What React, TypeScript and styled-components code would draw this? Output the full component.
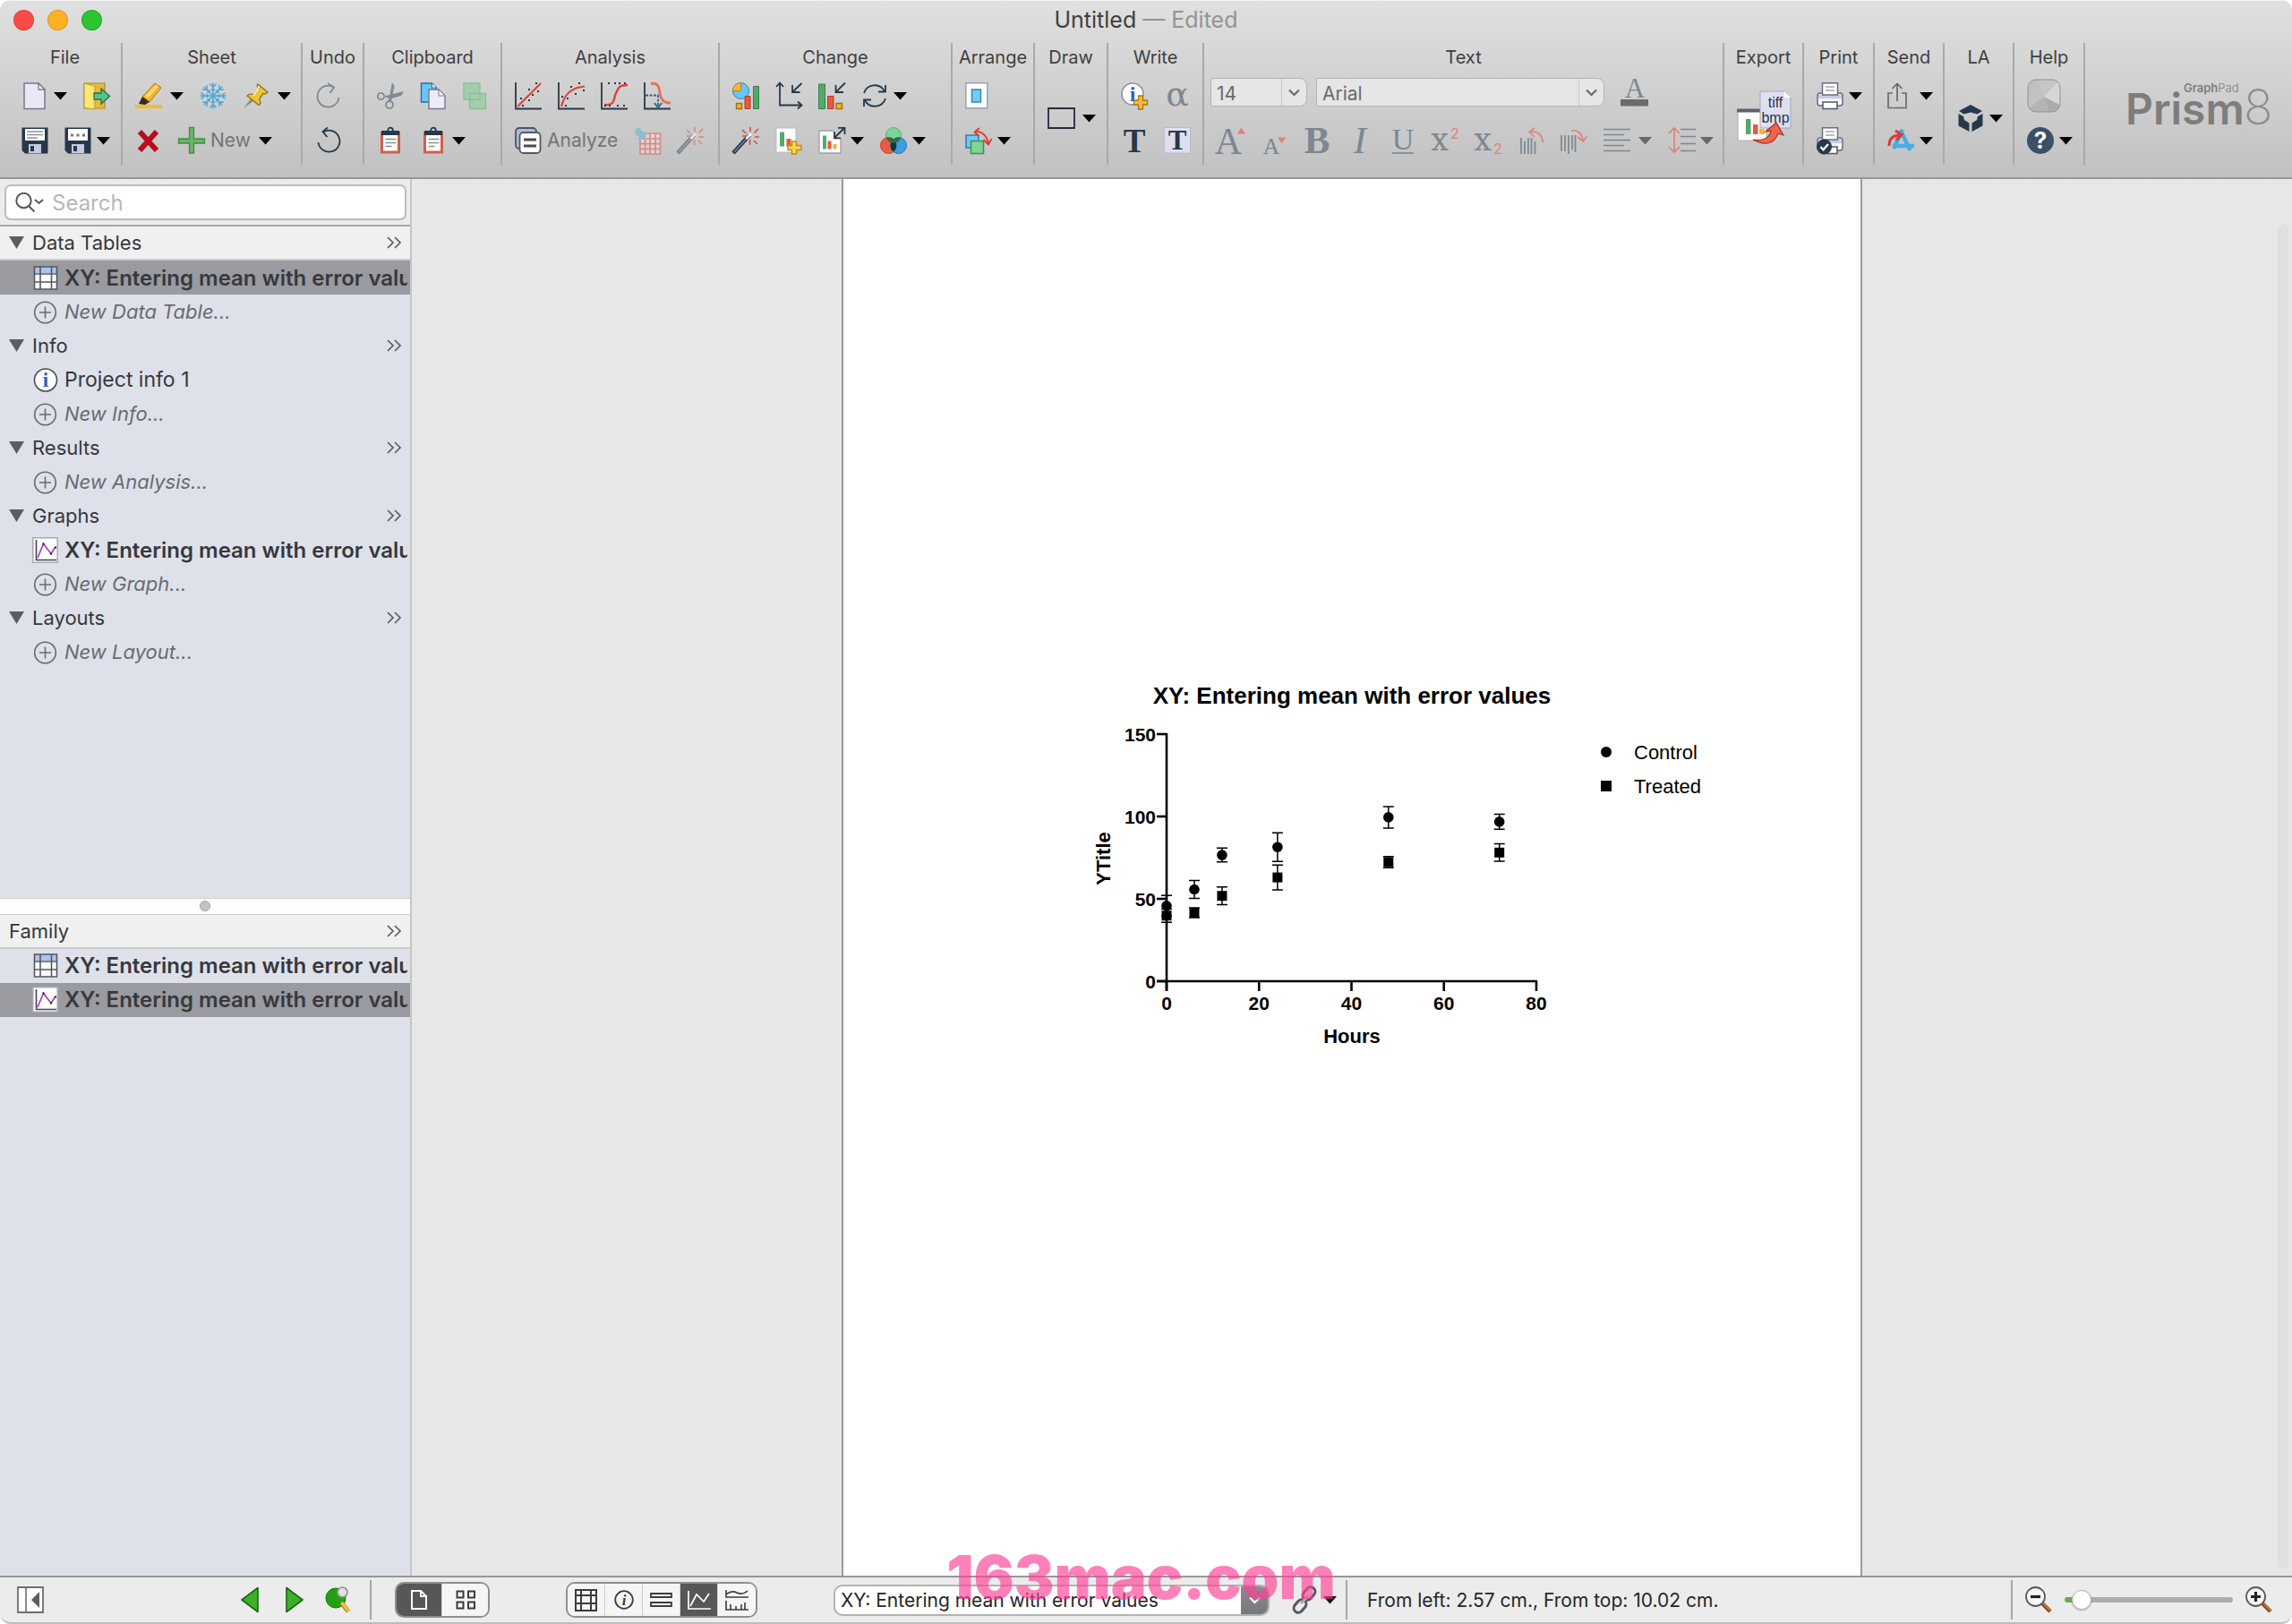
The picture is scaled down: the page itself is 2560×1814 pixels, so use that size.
import React from "react";
import styled, { createGlobalStyle, css } from "styled-components";

const UI = `Inter, "Liberation Sans", sans-serif`;
const SERIF = `"Liberation Serif", serif`;
const SLAB = `"DejaVu Serif", "Liberation Serif", serif`;
const NAVY = "#26384a";
const RED = "#e0443a";
const GREEN = "#55a868";
const STEEL = "#7c8791";

const GlobalStyle = createGlobalStyle`
  *, *::before, *::after { box-sizing: border-box; }
  body { margin: 0; background: #fff; font-family: ${UI}; }
  button, select, input { font: inherit; color: inherit; }
`;

/* ---------- window frame ---------- */

const Window = styled.div`
  position: relative;
  display: flex;
  flex-direction: column;
  height: 100vh;
  overflow: hidden;
  border-radius: 12px;
  border-bottom: 2px solid #bdbdbd;
  background: #e7e7e7;
  color: #37383b;
`;

const Header = styled.header`
  flex: none;
  border-top: 1px solid #f4f4f4;
  border-bottom: 2px solid #979797;
  background: linear-gradient(#e0e0e0, #d2d2d2 45%, #c1c1c1);
`;

const TitleBar = styled.div`
  display: grid;
  grid-template-columns: 1fr auto 1fr;
  align-items: center;
  height: 42px;
  padding: 0 15px;
`;

const Lights = styled.div`
  display: flex;
  gap: 15px;
`;

const Light = styled.button<{ $color: string }>`
  width: 23px;
  height: 23px;
  padding: 0;
  border: 1px solid rgba(0, 0, 0, 0.12);
  border-radius: 50%;
  background: ${(p) => p.$color};
`;

const Title = styled.h1`
  margin: 0;
  font-size: 25px;
  line-height: 28px;
  font-weight: 400;
  color: #404040;
  span { color: #949494; }
`;

/* ---------- ribbon ---------- */

const Ribbon = styled.div`
  display: flex;
  padding: 5px 24px 14px 10px;
`;

const Group = styled.section<{ $width: number }>`
  flex: none;
  width: ${(p) => p.$width}px;
  height: 136px;
  padding-top: 4px;
  border-right: 2px solid #a9a9a9;
`;

const GroupLabel = styled.h2`
  margin: 0 0 6px;
  font-size: 20px;
  line-height: 24px;
  font-weight: 400;
  text-align: center;
  white-space: nowrap;
  color: #404040;
`;

const Rows = styled.div<{ $pad?: number }>`
  display: grid;
  grid-auto-rows: 1fr;
  height: 100px;
  padding-left: ${(p) => p.$pad ?? 14}px;
`;

const Row = styled.div<{ $indent?: boolean; $gap?: number; $raised?: boolean }>`
  display: flex;
  align-items: center;
  gap: ${(p) => p.$gap ?? 18}px;
  padding-left: ${(p) => (p.$indent ? 7 : 0)}px;
  padding-bottom: ${(p) => (p.$raised ? 8 : 0)}px;
`;

const Split = styled.div<{ $wide?: boolean }>`
  display: flex;
  align-items: center;
  gap: ${(p) => (p.$wide ? 9 : 6)}px;
`;

const ToolButton = styled.button<{ $faded?: boolean }>`
  display: flex;
  align-items: center;
  gap: 6px;
  padding: 0;
  border: 0;
  background: none;
  font-size: 21px;
  line-height: 30px;
  color: #747474;
  opacity: ${(p) => (p.$faded ? 0.5 : 1)};
  svg { display: block; flex: none; overflow: visible; }
`;

const ComboFrame = styled.div<{ $width: number }>`
  display: flex;
  width: ${(p) => p.$width}px;
  height: 32px;
  border: 1px solid #b3b3b3;
  border-radius: 2px 8px 8px 2px;
  background: #e6e6e6;
  color: #6a6a6a;
`;

const ComboSelect = styled.select`
  flex: 1;
  min-width: 0;
  padding: 3px 0 0 6px;
  border: 0;
  background: none;
  appearance: none;
  font-size: 21px;
  line-height: 26px;
`;

const ComboArrow = styled.span`
  display: grid;
  place-items: center;
  width: 28px;
  border-left: 1px solid #c8c8c8;
`;

const Brand = styled.div`
  display: flex;
  align-items: center;
  margin-left: auto;
  svg { overflow: visible; }
`;

/* ---------- body ---------- */

const Body = styled.div`
  display: flex;
  flex: 1;
  min-height: 0;
`;

const Sidebar = styled.aside`
  display: flex;
  flex-direction: column;
  flex: none;
  width: 460px;
  border-right: 2px solid #c6c6ca;
  background: #dee1ea;
`;

const SearchPane = styled.div`
  padding: 6px 4px 5px 5px;
  border-bottom: 2px solid #a6a6a6;
  background: #ececec;
`;

const SearchBox = styled.label`
  display: flex;
  align-items: center;
  gap: 9px;
  height: 40px;
  padding: 0 10px;
  border: 2px solid #bcbcbc;
  border-radius: 7px;
  background: #fff;
`;

const SearchInput = styled.input`
  flex: 1;
  min-width: 0;
  padding: 0;
  border: 0;
  outline: 0;
  background: none;
  font-size: 24px;
  &::placeholder { color: #b7b7b7; opacity: 1; }
`;

const Tree = styled.nav`
  flex: 64 1 0;
  min-height: 0;
  overflow: hidden;
`;

const SectionHead = styled.h3<{ $plate?: boolean }>`
  display: flex;
  align-items: center;
  gap: 10px;
  height: 38px;
  margin: 0;
  padding: 0 9px 0 10px;
  font-size: 22px;
  font-weight: 400;
  ${(p) =>
    p.$plate &&
    css`
      border-bottom: 2px solid #c9cacd;
      background: #f0f0f0;
    `}
`;

const SectionToggle = styled.button`
  display: flex;
  align-items: center;
  flex: 1;
  gap: 9px;
  padding: 0;
  border: 0;
  background: none;
  text-align: left;
`;

const MoreButton = styled.button`
  padding: 0;
  border: 0;
  background: none;
  svg { display: block; }
`;

const ITEM_SIZE = { bold: 24, plain: 23, new: 22 };

const ItemRow = styled.button<{ $kind: "bold" | "plain" | "new"; $selected?: boolean }>`
  display: flex;
  align-items: center;
  gap: 7px;
  width: 100%;
  height: 38px;
  padding: 0 3px 0 36px;
  border: 0;
  background: ${(p) => (p.$selected ? "#999ba0" : "none")};
  font-size: ${(p) => ITEM_SIZE[p.$kind]}px;
  font-weight: ${(p) => (p.$kind === "bold" ? 600 : 400)};
  font-style: ${(p) => (p.$kind === "new" ? "italic" : "normal")};
  color: ${(p) => (p.$kind === "new" ? "#696b70" : "#37383b")};
  text-align: left;
  svg { flex: none; }
  span {
    flex: 1;
    overflow: hidden;
    white-space: nowrap;
  }
`;

const Splitter = styled.div`
  display: grid;
  place-items: center;
  flex: none;
  height: 19px;
  border: 1px solid #cfcfd2;
  border-width: 1px 0;
  background: #fdfdfd;
  &::after {
    content: "";
    width: 12px;
    height: 12px;
    border: 1px solid #a4a4a4;
    border-radius: 50%;
    background: #c4c4c4;
  }
`;

const FamilyPane = styled.section`
  flex: 63 1 0;
  min-height: 0;
`;

const Canvas = styled.main`
  position: relative;
  display: flex;
  justify-content: center;
  flex: 1;
  min-width: 0;
`;

const Page = styled.div`
  display: flex;
  align-items: center;
  justify-content: center;
  width: 1140px;
  border: 2px solid #9a9a9a;
  border-width: 0 2px;
  background: #fff;
`;

const ScrollThumb = styled.div`
  position: absolute;
  top: 50px;
  right: 4px;
  bottom: 8px;
  width: 12px;
  border-radius: 6px;
  background: #dfdfdf;
`;

/* ---------- status bar ---------- */

const StatusBar = styled.footer`
  display: flex;
  align-items: center;
  flex: none;
  height: 52px;
  border-top: 2px solid #979797;
  background: #ececec;
  color: #262626;
`;

const StatusLeft = styled.div`
  display: flex;
  align-items: center;
  justify-content: space-between;
  width: 415px;
  height: 44px;
  padding: 0 20px 0 19px;
  border-right: 2px solid #a6a6a6;
`;

const NavButtons = styled.div`
  display: flex;
  gap: 18px;
`;

const Segments = styled.div<{ $left: number }>`
  display: flex;
  height: 40px;
  margin-left: ${(p) => p.$left}px;
  border: 2px solid #8e8e8e;
  border-radius: 10px;
  overflow: hidden;
`;

const Segment = styled.button<{ $on?: boolean; $wide?: boolean }>`
  display: grid;
  place-items: center;
  width: ${(p) => (p.$wide ? 51 : 42)}px;
  padding: 0;
  border: 0;
  border-right: 1px solid #d0d0d0;
  background: ${(p) => (p.$on ? "#575757" : "#f5f5f5")};
  color: ${(p) => (p.$on ? "#fff" : "#3c3c3c")};
  &:last-child { border-right: 0; }
`;

const SheetPicker = styled.div`
  display: flex;
  width: 487px;
  height: 35px;
  margin-left: 85px;
  border: 2px solid #b2b2b2;
  border-radius: 10px;
  background: #fff;
  overflow: hidden;
`;

const SheetSelect = styled.select`
  flex: 1;
  min-width: 0;
  padding: 0 0 0 6px;
  border: 0;
  background: none;
  appearance: none;
  font-size: 21px;
`;

const SheetArrow = styled.span`
  display: grid;
  place-items: center;
  width: 30px;
  background: linear-gradient(#8b8b90, #77777c);
`;

const LinkTool = styled.div`
  display: flex;
  align-items: center;
  gap: 6px;
  height: 44px;
  padding: 0 10px 0 24px;
  border-right: 2px solid #a6a6a6;
`;

const Position = styled.p`
  margin: 0 0 0 22px;
  font-size: 21px;
  white-space: nowrap;
`;

const Zoom = styled.div`
  display: flex;
  align-items: center;
  gap: 14px;
  height: 44px;
  margin-left: auto;
  padding: 0 22px 0 14px;
  border-left: 2px solid #a6a6a6;
`;

const ZoomSlider = styled.input`
  width: 188px;
  height: 24px;
  margin: 0;
  appearance: none;
  background: none;
  &::-webkit-slider-runnable-track {
    height: 6px;
    border-radius: 3px;
    background: linear-gradient(90deg, #6fa84f 8%, #adadad 8%);
  }
  &::-webkit-slider-thumb {
    appearance: none;
    width: 22px;
    height: 22px;
    margin-top: -8px;
    border: 1px solid #b5b5b5;
    border-radius: 50%;
    background: #fff;
    box-shadow: 0 1px 2px rgba(0, 0, 0, 0.25);
  }
`;

const Watermark = styled.div`
  position: absolute;
  left: 41.3%;
  bottom: 10px;
  font-size: 67px;
  line-height: 80px;
  font-weight: 900;
  color: rgba(255, 64, 150, 0.66);
  pointer-events: none;
`;

/* ---------- drawings ---------- */

type Kids = { children: React.ReactNode };
const I = ({ children }: Kids) => (
  <svg width="30" height="30" viewBox="0 0 30 30" fill="none" aria-hidden="true">{children}</svg>
);

const CaretMark = ({ color = "#000" }: { color?: string }) => (
  <svg width="15" height="9" viewBox="0 0 15 9" aria-hidden="true"><path d="M0 0h15L7.500 8.500z" fill={color} /></svg>
);

const Chevron = ({ color = "#6a6a6a" }: { color?: string }) => (
  <svg width="13" height="9" viewBox="0 0 13 9" fill="none" aria-hidden="true">
    <path d="M1 1.500l5.500 5.500L12 1.500" stroke={color} strokeWidth="2.200" />
  </svg>
);

const Floppy = ({ dots }: { dots?: boolean }) => (
  <I>
    <path d="M.5.5h29v29H4l-3.500-3.500z" fill={NAVY} />
    <path d="M4 2h22v13H4z" fill="#fff" />
    {dots ? (
      <path d="M7 7.500h3v3H7zM13.500 7.500h3v3h-3zM20 7.500h3v3h-3z" fill="#777" />
    ) : (
      <path d="M6 5h18M6 8.500h18M6 12h12" stroke="#8e9296" strokeWidth="1.300" />
    )}
    <path d="M8 19h14v10H8z" fill="#c5c9e2" />
    <path d="M10 21h4v6h-4z" fill={NAVY} />
  </I>
);

const Clipboard = () => (
  <I>
    <path d="M4 5h22v24.500H4z" fill="#cf5f4b" />
    <path d="M7 9h16v17.500H7z" fill="#fff" />
    <path d="M5 4h20v5H5z" fill={NAVY} />
    <circle cx="15" cy="3.500" r="2.800" stroke={NAVY} strokeWidth="1.800" />
    <path d="M9.500 13.500h12M9.500 17.500h12M9.500 21.500h7" stroke="#8a8f98" strokeWidth="1.400" />
  </I>
);

const Plot = ({ children }: Kids) => (
  <I>
    <path d="M1 0v29.500H30" stroke={NAVY} strokeWidth="1.800" />
    {children}
  </I>
);

const Wand = () => (
  <I>
    <path d="M1 29l18-20" stroke={NAVY} strokeWidth="4.500" />
    <path d="M2 28L15.500 13" stroke="#6f7f90" strokeWidth="1.600" />
    <path d="M15.500 13l5-5.500" stroke="#fff" strokeWidth="3" />
    <path d="M20 0v5M11 3l4 4M29 2l-4.500 4.500M25 11h5M24 15l4 4M19.500 14v6M11 10h4" stroke={RED} strokeWidth="1.500" />
  </I>
);

const Printer = ({ done }: { done?: boolean }) => (
  <I>
    <rect x="1" y="12" width="28" height="14" rx="3" fill="#f4f4fb" stroke="#6b6c80" strokeWidth="1.500" />
    <path d="M2 16h26" stroke="#c9cae6" strokeWidth="4" />
    <path d="M6.500.8h17V14h-17z" fill="#fff" stroke="#6b6c80" strokeWidth="1.500" />
    <path d="M10 5h10M10 9h10" stroke="#a4a8ad" strokeWidth="1.300" />
    <path d="M7 22h16v7.500H7z" fill="#fff" stroke="#55566a" strokeWidth="1.500" />
    {done && (
      <>
        <circle cx="8.500" cy="22" r="8.500" fill={NAVY} />
        <path d="M4.500 22l3 3.300 5.500-6.300" stroke="#fff" strokeWidth="2.200" />
      </>
    )}
  </I>
);

const Glyph = ({ text, size, weight = 400, italic, family = SERIF, color = STEEL, x = 15, y = 29 }: {
  text: string; size: number; weight?: number; italic?: boolean; family?: string; color?: string; x?: number; y?: number;
}) => (
  <text x={x} y={y} fontSize={size} fontWeight={weight} fontStyle={italic ? "italic" : "normal"} textAnchor="middle" fill={color} style={{ fontFamily: family }}>
    {text}
  </text>
);

const Icons = {
  newDoc: <I><path d="M3 1h16l7 7v21.500H3z" fill="#e9e9f6" stroke="#77788f" strokeWidth="1.500" /><path d="M19 1l7 7h-7z" fill="#fff" stroke="#77788f" strokeWidth="1.300" /></I>,
  exit: <I><path d="M1 1h23v28H1z" fill="#e9b93c" stroke="#b08a1e" strokeWidth="1.200" /><path d="M1 1l12 3v26L1 28.500z" fill="#fbe774" stroke="#b9982f" /><path d="M12 12h8V7l9.500 8.500L20 24v-5h-8z" fill="#56c48a" stroke="#22734c" strokeWidth="1.300" /></I>,
  highlight: <I><path d="M0 25h30v4H0z" fill="#f3bd2a" /><path d="M8 16L22 1l7 5-13 16z" fill="#f4b42c" stroke="#a87716" /><path d="M11 15.500L23.500 2.500l2.500 2-12 13.500z" fill="#fbd870" /><path d="M8 16l8 6-5 3-7-1z" fill="#3a2a1a" /></I>,
  snow: <I><g stroke="#4ba7dc" strokeWidth="1.500">{[0, 45, 90, 135].map((a) => (
    <path key={a} transform={`rotate(${a} 15 15)`} d="M15 .5v29M11.500 1.500L15 5.500l3.500-4M11.500 28.500L15 24.500l3.500 4M13 7.500l2 2 2-2M13 22.500l2-2 2 2" />))}</g></I>,
  pin: <I><path d="M1 29l9-12 3 3z" fill="#8b8b8b" /><path d="M17 2l11 9-3 2-2-.500-4 6 1 5-2 2L5 15l3-2 5 .500 5-6L16 4z" fill="#e9c437" stroke="#8a6d12" strokeWidth="1.200" /><path d="M18 4l-1 4-5 7" stroke="#fbeaa0" strokeWidth="2" /></I>,
  redo: <I><path d="M21 5.500A12 12 0 1 0 26.500 17" stroke="#7f8a95" strokeWidth="1.800" /><path d="M14 1l7 4.500-4.500 6.500" stroke="#7f8a95" strokeWidth="1.800" /></I>,
  undo: <I><path d="M9 5.500A12 12 0 1 1 3.500 17" stroke={NAVY} strokeWidth="1.800" /><path d="M14 .5L8.500 5l5 6" stroke={NAVY} strokeWidth="1.800" /></I>,
  cut: <I><circle cx="4.500" cy="15.500" r="3.700" stroke="#7f8a95" strokeWidth="1.800" /><circle cx="14" cy="25" r="4" stroke="#7f8a95" strokeWidth="1.800" /><path d="M8 15.500l22-5.500-3 5-12.500 3.500zM13 21L17 0l2.500 4L16 21z" fill="#7f8a95" /></I>,
  copy: <I><path d="M1.500 1h12l5 5v16h-17z" fill="#67c6f7" stroke="#2c6d9c" strokeWidth="1.400" /><path d="M13.500 1v5h5" fill="#fff" stroke="#2c6d9c" /><path d="M10 8h11l7 7v14.500H10z" fill="#ececf9" stroke="#77788f" strokeWidth="1.400" /><path d="M21 8v7h7z" fill="#fff" stroke="#77788f" /></I>,
  dup: <I><path d="M1 1h18v18H1zM7.500 12.500h18v17h-18z" fill="#a2cdac" stroke="#8abf97" strokeWidth="1.300" /></I>,
  cross: <I><path d="M5 5l19 21M24 5L5 26" stroke="#b80f1f" strokeWidth="6" /></I>,
  plus: <I><path d="M12.500.5h5v12.500h12v5h-12v11h-5V18h-12v-5h12z" fill="#68b468" stroke="#3f8f45" strokeWidth="1.300" /></I>,
  linear: <Plot><path d="M3 27L29 1" stroke={RED} strokeWidth="2.200" /><path d="M8 25h2v2H8zM15 19h2v2h-2zM6 17h2v2H6zM19 13h2v2h-2zM25 9h2v2h-2zM23 0h2v2h-2zM15 7h2v2h-2z" fill={NAVY} /></Plot>,
  curve: <Plot><path d="M4 27Q9 6 30 4.500" stroke={RED} strokeWidth="2.200" /><path d="M8 25h2v2H8zM10 17h2v2h-2zM4 15h2v2H4zM19 12h2v2h-2zM28 8h2v2h-2zM23 0h2v2h-2zM14 4h2v2h-2z" fill={NAVY} /></Plot>,
  sigmoid: <Plot><path d="M4 25C17 26 14 18 17 12S20 3 30 3" stroke={RED} strokeWidth="2.400" /><path d="M8 0h2v2H8zM15 0h2v2h-2zM20 0h2v2h-2zM26 0h2v2h-2zM4 25h2v2H4zM9 25h2v2H9zM18 25h2v2h-2zM25 25h2v2h-2z" fill={NAVY} /></Plot>,
  interp: <Plot><path d="M8 1.500C17 0 17 6 18 12s3 11 12 11" stroke="#f06f55" strokeWidth="2.800" /><path d="M2 14.500h14V27" stroke="#2e5f92" strokeWidth="1.800" strokeDasharray="3 1.500" /><path d="M12 23l4 5.500 4-5.500" stroke="#2e5f92" strokeWidth="1.800" /></Plot>,
  analyze: <I><rect x="1" y="1" width="23" height="23" rx="4" fill="#a9bde0" stroke="#4f535b" strokeWidth="1.800" /><rect x="5.500" y="6" width="23" height="23" rx="4" fill="#fff" stroke="#55585e" strokeWidth="1.800" /><path d="M10 14h14M10 21h14" stroke="#4c4c4c" strokeWidth="3" /></I>,
  grid: <I><path d="M7 7h22.500v23H7z" fill="#f7e2df" /><path d="M7 7h22.500v23H7zM7 13h22.500M7 18.700h22.500M7 24.300h22.500M12.500 7v23M18 7v23M24 7v23" stroke="#e2544a" strokeWidth="1.700" /><path d="M2 2l5-1 1 3 5 2v8H4l2-3-5-4z" fill="#4fb3e4" /></I>,
  wand: <Wand />,
  chartType: <I><circle cx="9.500" cy="9.500" r="9" fill="#67c6f7" stroke="#3b84b5" /><path d="M9.500.5v9h-9a9 9 0 0 1 9-9z" fill="#f5b93f" stroke="#b78420" /><path d="M23.500 4.500h6v25h-6z" fill={GREEN} stroke="#37814a" /><path d="M14 15.500h6v14h-6z" fill="#e9593f" stroke="#b03b26" /><path d="M4.500 23.500h6v6h-6z" fill="#f3b23a" stroke="#9c7011" strokeWidth="1.400" /></I>,
  axes: <I><path d="M5 1v24.500h24M1 5l4-4.500L9 5M25 21.500l4.500 4-4.500 4M29.500 1L19.500 10.500M19 3v8h8.500" stroke={NAVY} strokeWidth="1.800" /></I>,
  reorder: <I><path d="M.5 2h7v27.500h-7z" fill={GREEN} stroke="#37814a" /><path d="M10.500 15.500h6.500v14h-6.500z" fill="#e9593f" stroke="#b03b26" /><path d="M20 23.500h6.500v6H20z" fill="#f3b23a" stroke="#9c7011" strokeWidth="1.400" /><path d="M30 .5L20 10.500M19.500 3v8H28" stroke={NAVY} strokeWidth="1.800" /></I>,
  refresh: <I><path d="M3 12A12.500 12.500 0 0 1 26 10M27 18A12.500 12.500 0 0 1 4 20" stroke={NAVY} strokeWidth="1.800" /><path d="M19 10.500h8V3M11 19.500H3V27" stroke={NAVY} strokeWidth="1.800" /></I>,
  addChart: <I><path d="M1 1h22v27H1z" fill="#fff" stroke="#b9bac8" /><path d="M5 5.500h5v16H5z" fill={GREEN} /><path d="M12.500 13h5v9h-5z" fill="#e9593f" /><path d="M18.500 16h5v4.500h5.500v5h-5.500v4.500h-5v-4.500h-4.500v-5h4.500z" fill="#fbd74b" stroke="#b98d16" strokeWidth="1.300" /></I>,
  scaleChart: <I><path d="M1 4h24v25H1z" fill="#fff" stroke="#9c9eb0" strokeWidth="1.300" /><path d="M5 9.500h4v15H5z" fill={GREEN} /><path d="M10.500 15.500h4v9h-4z" fill="#e9593f" /><path d="M16.500 19h4v5.500h-4z" fill="#f3b23a" /><path d="M17 0h13v13H17z" fill="#cbcbcb" /><path d="M18 12L29.500.5M22 .8h7.500V8M25 12.300h-7V5" stroke={NAVY} strokeWidth="1.800" /></I>,
  venn: <I><circle cx="15" cy="9" r="8.500" fill="#7ed39a" stroke="#5bb279" /><circle cx="9.500" cy="20.500" r="9" fill="#f0593c" stroke="#b9432c" /><circle cx="20.500" cy="20.500" r="9" fill="#3d9de0" stroke="#2c77b0" /><path d="M15 13.500a9 9 0 0 1 0 14 9 9 0 0 1 0-14z" fill="#123a33" /><path d="M7 12a9 9 0 0 1 8 1.500 9 9 0 0 1 8-1.500 8.500 8.500 0 0 1-16 0z" fill="#2d6b46" /></I>,
  page: <I><path d="M.8.8h24v28H.8z" fill="#fff" stroke="#9c9eb8" strokeWidth="1.500" /><path d="M7.500 8h10v14h-10z" fill="#6fcbf9" stroke="#3c86b3" strokeWidth="1.500" /></I>,
  arrange: <I><path d="M1 9h14v14H1z" fill="#6fc8f5" stroke="#2f7fae" strokeWidth="1.500" /><path d="M6.500 15.500h14v14h-14z" fill="#82d495" stroke="#3e9150" strokeWidth="1.500" /><path d="M11 5c7-1 13 4 15 13M16 1l-5.500 4.500 5 4.500M20.500 14l5.500 5.500 3.500-6.500" stroke="#dc3a33" strokeWidth="1.800" /></I>,
  rect: <I><path d="M1 4h29v22H1z" stroke="#2d2740" strokeWidth="1.800" /></I>,
  info: <I><circle cx="13" cy="13" r="12" fill="#fff" stroke="#8b8e9c" strokeWidth="1.600" /><Glyph text="i" size={24} weight={700} color="#2d63b4" x={13} y={21} /><path d="M19.500 15h5v5h5v5h-5v5h-5v-5h-5v-5h5z" fill="#f7b93c" stroke="#a9780f" strokeWidth="1.300" /></I>,
  alpha: <I><Glyph text="α" size={38} family={SLAB} y={26} x={15} /></I>,
  tPlain: <I><Glyph text="T" size={37} weight={700} color={NAVY} y={28} x={15} /></I>,
  tBox: <I><path d="M.5.5h29v28.500H.5z" fill="#dfe0ef" stroke="#b9bace" /><Glyph text="T" size={31} weight={700} color={NAVY} y={25} /></I>,
  grow: <I><Glyph text="A" size={42} x={13} y={30} /><path d="M23 7.500L27.500.5 32 7.500z" fill="#d9847c" /></I>,
  shrink: <I><Glyph text="A" size={26} x={13} y={30} /><path d="M20 11.500h9.500L24.700 18z" fill="#d9847c" /></I>,
  bold: <I><Glyph text="B" size={43} weight={700} x={16} /></I>,
  italic: <I><Glyph text="I" size={43} italic x={16} /></I>,
  under: <I><Glyph text="U" size={34} x={16} y={25} /><path d="M4 29h24" stroke={STEEL} strokeWidth="1.600" /></I>,
  sup: <I><Glyph text="x" size={35} x={9} y={26} family={SLAB} /><Glyph text="2" size={16} x={26} y={13} family={UI} color="#dd8279" /></I>,
  sub: <I><Glyph text="x" size={35} x={9} y={26} family={SLAB} /><Glyph text="2" size={16} x={26} y={30} family={UI} color="#dd8279" /></I>,
  rotL: <I><path d="M4 12v18M8 16v14M12 12v18M15.500 12v18M19.500 16v14" stroke={STEEL} strokeWidth="1.700" /><path d="M14 5c7-1 14 3 14 12M19 1l-6 4 6 6" stroke="#e08078" strokeWidth="1.600" /></I>,
  rotR: <I><path d="M1 9v18M5 9v18M9 9v21M13 9v16M16.500 9v19" stroke={STEEL} strokeWidth="1.700" /><path d="M12 4c7-1 12 2 13 11M19 11l6.500 5 4-6" stroke="#e08078" strokeWidth="1.600" /></I>,
  align: <I><path d="M0 2.500h30M0 8.500h23M0 14.500h30M0 20.500h23M0 26.500h30" stroke={STEEL} strokeWidth="1.700" /></I>,
  spacing: <I><path d="M14 2.500h17M14 10.500h17M14 18.500h17M14 26.500h17" stroke={STEEL} strokeWidth="1.700" /><path d="M7 1v27M1 7l6-6 6 6M1 22l6 6 6-6" stroke="#e08078" strokeWidth="1.700" /></I>,
  fontColor: <I><Glyph text="A" size={31} x={16} y={21} /><path d="M0 23h31v7.500H0z" fill="#6b6b6b" /></I>,
  printer: <Printer />,
  printed: <Printer done />,
  share: <I><path d="M6 12H1v16.500h20V12h-5M11 21V2M5.500 7L11 1.500 16.500 7" stroke="#6a6a6a" strokeWidth="1.700" /></I>,
  appStore: <I><path d="M17 3L7 24M14.500 3l11 23M6 21h24" stroke="#4aaae6" strokeWidth="4.500" /><path d="M2 21c0-8 4-12 12-12M9 4l7 4.500-6 6" stroke="#d93a34" strokeWidth="3" /></I>,
  cube: <I><path d="M15 0l13 7-5.500 3.500L15 8.500l-7.500 2L2 7z" fill={NAVY} /><path d="M1.500 10l5.500 3 1 4 5.500 3.500V30l-12-6.500zM28.500 10L23 13l-1 4-5.500 3.500V30l12-6.500z" fill={NAVY} /></I>,
  help: <I><circle cx="15" cy="15" r="15" fill="#3b4f66" /><Glyph text="?" size={26} weight={700} family={UI} color="#fff" y={24} /></I>,
};

const GemIcon = () => (
  <svg width="38" height="38" viewBox="0 0 38 38" aria-hidden="true">
    <defs>
      <clipPath id="gem"><rect x="1" y="1" width="36" height="36" rx="9" /></clipPath>
      <linearGradient id="gemShade" x1="0" y1="0" x2="1" y2="1"><stop offset="0" stopColor="#bdbdbd" /><stop offset="1" stopColor="#c9c9c9" /></linearGradient>
    </defs>
    <g clipPath="url(#gem)">
      <path d="M0 0h38v38H0z" fill="url(#gemShade)" />
      <path d="M11 0h27L19 20z" fill="#c6c6c6" />
      <path d="M38 0v30L19 20z" fill="#d6d6d6" />
      <path d="M0 34l19-14 6 18H0z" fill="#b4b4b4" />
      <path d="M19 20l6 18h13v-8z" fill="#acacac" />
    </g>
    <rect x="1" y="1" width="36" height="36" rx="9" fill="none" stroke="#929292" />
  </svg>
);

const FORMAT_FONT = { fontFamily: `"Liberation Sans", sans-serif` };

const ExportIcon = () => (
  <svg width="62" height="62" viewBox="0 0 62 62" fill="none" aria-hidden="true">
    <path d="M1 22h32v34H1z" fill="#fff" stroke="#a9abb8" />
    <path d="M0 20.500h34v4H0z" fill="#5d6273" />
    <path d="M10 32h5.500v17H10z" fill={GREEN} /><path d="M18 38h5.500v11H18z" fill="#e9593f" /><path d="M25 43h6v6h-6z" fill="#f3b23a" />
    <path d="M26 1h27l7 7v34H26z" fill="#dedff0" stroke="#a5a7bb" />
    <path d="M53 1v7h7z" fill="#fff" />
    <text x="43" y="19" fontSize="16" textAnchor="middle" fill={NAVY} style={FORMAT_FONT}>tiff</text>
    <text x="43" y="36" fontSize="16" textAnchor="middle" fill={NAVY} style={FORMAT_FONT}>bmp</text>
    <path d="M18 55q18 2 20-10l-6 1 12-10 8 14-6-2q-7 18-28 7z" fill="#f0644a" stroke="#a8331f" strokeWidth="1.200" />
  </svg>
);

const BrandLogo = () => (
  <svg width="160" height="54" viewBox="0 0 160 54" role="img" aria-label="GraphPad Prism 8">
    <g fill="#7d7d7d" style={{ fontFamily: UI }}>
      <text x="63" y="14" fontSize="13"><tspan fontWeight="600">Graph</tspan><tspan fontWeight="300">Pad</tspan></text>
      <text x="-2" y="50" fontSize="48" fontWeight="600">Prism</text>
      <text x="130" y="50" fontSize="54" fontWeight="200" fill="#8c8c8c">8</text>
    </g>
  </svg>
);

const SheetIcon = () => (
  <svg width="29" height="29" viewBox="0 0 29 29" fill="none" aria-hidden="true">
    <path d="M2 2h26v25H2z" fill="#fff" /><path d="M2 2h26v7H2z" fill="#a9c6ec" />
    <path d="M2.500 2h25v25h-25zM2 10h26M2 19h26M9 2v25M21.500 2v25" stroke="#55575c" strokeWidth="1.600" />
  </svg>
);
const GraphIcon = () => (
  <svg width="29" height="29" viewBox="0 0 29 29" fill="none" aria-hidden="true">
    <path d="M.8.800h27.400v27.400H.8z" fill="#fff" stroke="#aaa" strokeWidth="1.500" />
    <path d="M4.500 3v22.500H27" stroke="#3b3f66" strokeWidth="1.600" />
    <path d="M6 23l6.500-15.500 8.500 11 4.500-7" stroke="#a04bb4" strokeWidth="1.800" />
    <path d="M11.500 6.500h2v2h-2zM20 17.500h2v2h-2zM25 10.500h2v2h-2z" fill="#222" />
  </svg>
);
const InfoIcon = () => (
  <svg width="29" height="29" viewBox="0 0 29 29" aria-hidden="true">
    <circle cx="15" cy="14.500" r="12.500" fill="#fff" stroke="#4b4d52" strokeWidth="1.600" />
    <Glyph text="i" size={23} weight={700} color="#2d63b4" x={15} y={22} />
  </svg>
);
const PlusIcon = () => (
  <svg width="29" height="29" viewBox="0 0 29 29" fill="none" stroke="#696b70" strokeWidth="1.600" aria-hidden="true">
    <circle cx="14.500" cy="15" r="11.800" /><path d="M8 15h13M14.500 8.500v13" />
  </svg>
);
const More = ({ label }: { label: string }) => (
  <MoreButton aria-label={`More ${label}`}>
    <svg width="17" height="14" viewBox="0 0 17 14" fill="none" stroke="#5b5d62" strokeWidth="1.700"><path d="M1 1l6 6-6 6M9 1l6 6-6 6" /></svg>
  </MoreButton>
);

/* ---------- ribbon helpers ---------- */

const Tool = ({ icon, label, text, faded }: { icon: React.ReactNode; label: string; text?: string; faded?: boolean }) => (
  <ToolButton aria-label={label} $faded={faded}>{icon}{text}</ToolButton>
);
const Menu = ({ label, dim }: { label: string; dim?: boolean }) => (
  <ToolButton aria-label={`${label} menu`}><CaretMark color={dim ? "#686868" : "#000"} /></ToolButton>
);
const MenuTool = ({ icon, label, text, wide, dim }: { icon: React.ReactNode; label: string; text?: string; wide?: boolean; dim?: boolean }) => (
  <Split $wide={wide}><Tool icon={icon} label={label} text={text} /><Menu label={label} dim={dim} /></Split>
);
const Panel = ({ title, width, pad, children }: { title: string; width: number; pad?: number } & Kids) => (
  <Group $width={width}><GroupLabel>{title}</GroupLabel><Rows $pad={pad}>{children}</Rows></Group>
);

/* ---------- chart ---------- */

type Point = [hours: number, mean: number, error: number];
const CONTROL: Point[] = [[0, 45.8, 6.3], [6, 55.7, 5.4], [12, 76.6, 4.2], [24, 81.4, 8.7], [48, 99.5, 6.5], [72, 96.8, 4.5]];
const TREATED: Point[] = [[0, 39.8, 4], [6, 41.6, 3], [12, 51.8, 5.4], [24, 63, 7.5], [48, 72.3, 3.4], [72, 78.1, 5.3]];
const ORIGIN = { x: 213, y: 356 };
const px = (h: number) => ORIGIN.x + (h * 413) / 80;
const py = (v: number) => ORIGIN.y - (v * 276) / 150;

const Series = ({ points, square }: { points: Point[]; square?: boolean }) => (
  <g>
    {points.map(([h, m, e]) => (
      <g key={h}>
        <path d={`M${px(h)} ${py(m - e)}V${py(m + e)}M${px(h) - 6} ${py(m - e)}h12M${px(h) - 6} ${py(m + e)}h12`} stroke="#000" strokeWidth="1.500" />
        {square ? <rect x={px(h) - 5.5} y={py(m) - 5.5} width="11" height="11" /> : <circle cx={px(h)} cy={py(m)} r="5.800" />}
      </g>
    ))}
  </g>
);

const ChartText = styled.text<{ $size: number; $bold?: boolean }>`
  font-family: "Liberation Sans", Arial, sans-serif;
  font-size: ${(p) => p.$size}px;
  font-weight: ${(p) => (p.$bold ? 700 : 400)};
`;

const Chart = () => (
  <svg width="840" height="480" viewBox="0 0 840 480" role="img" aria-label="XY: Entering mean with error values">
    <ChartText $size={26} $bold x="420" y="46" textAnchor="middle">XY: Entering mean with error values</ChartText>
    <path d={`M${ORIGIN.x} ${py(150) - 1}V${ORIGIN.y + 11}M${ORIGIN.x - 11} ${ORIGIN.y}H${px(80) + 1}`} stroke="#000" strokeWidth="2.600" />
    {[0, 50, 100, 150].map((v) => (
      <g key={v}>
        <path d={`M${ORIGIN.x - 11} ${py(v)}h11`} stroke="#000" strokeWidth="2.600" />
        <ChartText $size={21} $bold x={ORIGIN.x - 12} y={py(v) + 8} textAnchor="end">{v}</ChartText>
      </g>
    ))}
    {[0, 20, 40, 60, 80].map((h) => (
      <g key={h}>
        <path d={`M${px(h)} ${ORIGIN.y}v11`} stroke="#000" strokeWidth="2.600" />
        <ChartText $size={21} $bold x={px(h)} y={ORIGIN.y + 32} textAnchor="middle">{h}</ChartText>
      </g>
    ))}
    <ChartText $size={22} $bold x="420" y="425" textAnchor="middle">Hours</ChartText>
    <ChartText $size={22} $bold textAnchor="middle" transform="translate(150 219) rotate(-90)">YTitle</ChartText>
    <Series points={CONTROL} />
    <Series points={TREATED} square />
    <circle cx="704" cy="100" r="6" />
    <ChartText $size={22} x="735" y="108">Control</ChartText>
    <rect x="698" y="132" width="12" height="12" />
    <ChartText $size={22} x="735" y="146">Treated</ChartText>
  </svg>
);

/* ---------- sidebar data ---------- */

const LONG = "XY: Entering mean with error values";
type Item = { label: string; kind: "bold" | "plain" | "new"; icon: React.ReactNode; selected?: boolean };
const SECTIONS: { title: string; items: Item[] }[] = [
  { title: "Data Tables", items: [{ label: LONG, kind: "bold", icon: <SheetIcon />, selected: true }, { label: "New Data Table...", kind: "new", icon: <PlusIcon /> }] },
  { title: "Info", items: [{ label: "Project info 1", kind: "plain", icon: <InfoIcon /> }, { label: "New Info...", kind: "new", icon: <PlusIcon /> }] },
  { title: "Results", items: [{ label: "New Analysis...", kind: "new", icon: <PlusIcon /> }] },
  { title: "Graphs", items: [{ label: LONG, kind: "bold", icon: <GraphIcon /> }, { label: "New Graph...", kind: "new", icon: <PlusIcon /> }] },
  { title: "Layouts", items: [{ label: "New Layout...", kind: "new", icon: <PlusIcon /> }] },
];
const FAMILY: Item[] = [
  { label: LONG, kind: "bold", icon: <SheetIcon /> },
  { label: LONG, kind: "bold", icon: <GraphIcon />, selected: true },
];
const Entry = ({ item }: { item: Item }) => (
  <ItemRow $kind={item.kind} $selected={item.selected}>{item.icon}<span>{item.label}</span></ItemRow>
);

const Magnifier = ({ plus }: { plus?: boolean }) => (
  <I>
    <path d="M19 19l9 9" stroke="#8c4a1e" strokeWidth="4.500" />
    <path d="M19.500 18.500l8.500 8.500" stroke="#c9803f" strokeWidth="1.500" />
    <circle cx="11.500" cy="11.500" r="10.500" fill="#f6f6f6" stroke="#55595c" strokeWidth="1.800" />
    <path d={plus ? "M6 11.500h11M11.500 6v11" : "M6 11.500h11"} stroke="#222" strokeWidth="3.200" />
  </I>
);

const Arrow = ({ flip }: { flip?: boolean }) => (
  <svg width="32" height="30" viewBox="0 0 32 30" aria-hidden="true">
    <path d={flip ? "M7 1.500v27L25 15z" : "M25 1.500v27L7 15z"} fill="#3fae29" stroke="#14690c" strokeWidth="1.600" strokeLinejoin="round" />
  </svg>
);

export default function App() {
  return (
    <Window>
      <GlobalStyle />
      <Header>
        <TitleBar>
          <Lights>
            <Light $color="#fc4a47" aria-label="Close" />
            <Light $color="#fdb226" aria-label="Minimize" />
            <Light $color="#2bc533" aria-label="Full screen" />
          </Lights>
          <Title>Untitled <span>— Edited</span></Title>
        </TitleBar>
        <Ribbon>
          <Panel title="File" width={127}>
            <Row><MenuTool icon={Icons.newDoc} label="New file" /><Tool icon={Icons.exit} label="Open" /></Row>
            <Row><Tool icon={<Floppy />} label="Save" /><MenuTool icon={<Floppy dots />} label="Save as" /></Row>
          </Panel>
          <Panel title="Sheet" width={201}>
            <Row><MenuTool wide icon={Icons.highlight} label="Highlight" /><Tool icon={Icons.snow} label="Freeze" /><MenuTool wide icon={Icons.pin} label="Pin" /></Row>
            <Row><Tool icon={Icons.cross} label="Delete sheet" /><MenuTool wide icon={Icons.plus} label="New sheet" text="New" /></Row>
          </Panel>
          <Panel title="Undo" width={69}>
            <Row><Tool icon={Icons.redo} label="Redo" /></Row>
            <Row><Tool icon={Icons.undo} label="Undo" /></Row>
          </Panel>
          <Panel title="Clipboard" width={154}>
            <Row><Tool icon={Icons.cut} label="Cut" /><Tool icon={Icons.copy} label="Copy" /><Tool icon={Icons.dup} label="Duplicate" /></Row>
            <Row><Tool icon={<Clipboard />} label="Paste" /><MenuTool icon={<Clipboard />} label="Paste special" /></Row>
          </Panel>
          <Panel title="Analysis" width={243}>
            <Row><Tool icon={Icons.linear} label="Linear regression" /><Tool icon={Icons.curve} label="Nonlinear regression" /><Tool icon={Icons.sigmoid} label="Dose response" /><Tool icon={Icons.interp} label="Interpolate" /></Row>
            <Row><Tool icon={Icons.analyze} label="Analyze" text="Analyze" /><Tool faded icon={Icons.grid} label="Results table" /><Tool faded icon={Icons.wand} label="Analysis wizard" /></Row>
          </Panel>
          <Panel title="Change" width={260}>
            <Row><Tool icon={Icons.chartType} label="Graph type" /><Tool icon={Icons.axes} label="Format axes" /><Tool icon={Icons.reorder} label="Format graph" /><MenuTool icon={Icons.refresh} label="Reverse" /></Row>
            <Row><Tool icon={Icons.wand} label="Magic" /><Tool icon={Icons.addChart} label="Add data" /><MenuTool icon={Icons.scaleChart} label="Resize" /><MenuTool icon={Icons.venn} label="Color scheme" /></Row>
          </Panel>
          <Panel title="Arrange" width={92}>
            <Row><Tool icon={Icons.page} label="Center on page" /></Row>
            <Row><MenuTool icon={Icons.arrange} label="Order" /></Row>
          </Panel>
          <Panel title="Draw" width={82}>
            <Row><MenuTool wide icon={Icons.rect} label="Draw shape" /></Row>
          </Panel>
          <Panel title="Write" width={107}>
            <Row><Tool icon={Icons.info} label="Insert info" /><Tool icon={Icons.alpha} label="Greek letters" /></Row>
            <Row><Tool icon={Icons.tPlain} label="Text" /><Tool icon={Icons.tBox} label="Text box" /></Row>
          </Panel>
          <Panel title="Text" width={581} pad={7}>
            <Row $raised>
              <Row $gap={10}>
                <ComboFrame $width={108}><ComboSelect aria-label="Font size" defaultValue="14"><option>14</option></ComboSelect><ComboArrow><Chevron /></ComboArrow></ComboFrame>
                <ComboFrame $width={322}><ComboSelect aria-label="Font" defaultValue="Arial"><option>Arial</option></ComboSelect><ComboArrow><Chevron /></ComboArrow></ComboFrame>
              </Row>
              <Tool icon={Icons.fontColor} label="Font color" />
            </Row>
            <Row $indent>
              <Tool icon={Icons.grow} label="Larger" /><Tool icon={Icons.shrink} label="Smaller" /><Tool icon={Icons.bold} label="Bold" />
              <Tool icon={Icons.italic} label="Italic" /><Tool icon={Icons.under} label="Underline" /><Tool icon={Icons.sup} label="Superscript" />
              <Tool icon={Icons.sub} label="Subscript" /><Tool icon={Icons.rotL} label="Rotate left" /><Tool icon={Icons.rotR} label="Rotate right" />
              <MenuTool wide dim icon={Icons.align} label="Align" /><MenuTool dim icon={Icons.spacing} label="Line spacing" />
            </Row>
          </Panel>
          <Panel title="Export" width={89}>
            <Row><Tool icon={<ExportIcon />} label="Export" /></Row>
          </Panel>
          <Panel title="Print" width={79}>
            <Row><MenuTool icon={Icons.printer} label="Print" /></Row>
            <Row><Tool icon={Icons.printed} label="Print now" /></Row>
          </Panel>
          <Panel title="Send" width={78}>
            <Row><MenuTool icon={Icons.share} label="Share" /></Row>
            <Row><MenuTool icon={Icons.appStore} label="Send to" /></Row>
          </Panel>
          <Panel title="LA" width={78}>
            <Row><MenuTool icon={Icons.cube} label="LabArchives" /></Row>
          </Panel>
          <Panel title="Help" width={79}>
            <Row><Tool icon={<GemIcon />} label="Prism guide" /></Row>
            <Row><MenuTool icon={Icons.help} label="Help" /></Row>
          </Panel>
          <Brand><BrandLogo /></Brand>
        </Ribbon>
      </Header>

      <Body>
        <Sidebar>
          <SearchPane>
            <SearchBox>
              <svg width="32" height="22" viewBox="0 0 32 22" fill="none" stroke="#55575a" strokeWidth="2" aria-hidden="true">
                <circle cx="9.500" cy="9" r="8.200" /><path d="M15 15l6.500 6.500M22 8l4.500 4L31 8" />
              </svg>
              <SearchInput type="search" placeholder="Search" aria-label="Search" />
            </SearchBox>
          </SearchPane>
          <Tree aria-label="Navigator">
            {SECTIONS.map((s, i) => (
              <React.Fragment key={s.title}>
                <SectionHead $plate={i === 0}>
                  <SectionToggle aria-expanded="true">
                    <svg width="17" height="14" viewBox="0 0 17 14" aria-hidden="true"><path d="M0 0h17L8.500 14z" fill="#5b5d62" /></svg>
                    {s.title}
                  </SectionToggle>
                  <More label={s.title} />
                </SectionHead>
                {s.items.map((item) => <Entry key={item.label} item={item} />)}
              </React.Fragment>
            ))}
          </Tree>
          <Splitter role="separator" />
          <FamilyPane>
            <SectionHead $plate><SectionToggle>Family</SectionToggle><More label="Family" /></SectionHead>
            {FAMILY.map((item, i) => <Entry key={i} item={item} />)}
          </FamilyPane>
        </Sidebar>
        <Canvas>
          <Page><Chart /></Page>
          <ScrollThumb />
        </Canvas>
      </Body>

      <StatusBar>
        <StatusLeft>
          <Tool label="Hide navigator" icon={<I><path d="M1 1h28v28H1z" fill="#fff" stroke="#6d6d6d" strokeWidth="1.800" /><path d="M10 1v28" stroke="#6d6d6d" strokeWidth="1.600" /><path d="M25 6v18l-9-9z" fill="#5e5e5e" /></I>} />
          <NavButtons>
            <Tool label="Previous sheet" icon={<Arrow />} />
            <Tool label="Next sheet" icon={<Arrow flip />} />
            <Tool label="Find sheet" icon={<I><circle cx="12" cy="13" r="11" fill="#23a014" stroke="#117a09" /><path d="M18 18l8 10" stroke="#b77a12" strokeWidth="5" /><path d="M18.500 18l7.500 9.500" stroke="#f7c23b" strokeWidth="3" /><circle cx="19.500" cy="6.500" r="5.500" fill="#dfe3e0" stroke="#8b8f8c" strokeWidth="1.600" /></I>} />
          </NavButtons>
        </StatusLeft>
        <Segments $left={26}>
          <Segment $on $wide aria-label="Single sheet"><svg width="18" height="22" viewBox="0 0 18 22" fill="none" stroke="currentColor" strokeWidth="2"><path d="M1 1h10l6 6v14H1zM11 1v6h6" /></svg></Segment>
          <Segment $wide aria-label="Gallery"><svg width="22" height="22" viewBox="0 0 22 22" fill="none" stroke="currentColor" strokeWidth="2"><path d="M1.500 1.500h7v7h-7zM14 1.500h7v7h-7zM1.500 13.500h7v7h-7zM14 13.500h7v7h-7z" /></svg></Segment>
        </Segments>
        <Segments $left={85}>
          <Segment aria-label="Data tables"><svg width="25" height="25" viewBox="0 0 25 25" fill="none" stroke="currentColor" strokeWidth="2"><path d="M1 1h23v23H1zM1 7h23M1 16h23M7 1v23M18 1v23" /></svg></Segment>
          <Segment aria-label="Info"><svg width="22" height="22" viewBox="0 0 22 22" fill="none" stroke="currentColor" strokeWidth="1.800"><circle cx="11" cy="11" r="9.800" /><text x="11" y="17" fontSize="17" fontStyle="italic" fontWeight="700" textAnchor="middle" fill="currentColor" stroke="none" style={{ fontFamily: SERIF }}>i</text></svg></Segment>
          <Segment aria-label="Results"><svg width="25" height="16" viewBox="0 0 25 16" fill="none" stroke="currentColor" strokeWidth="1.800"><path d="M1 1h23v4H1zM1 11h23v4H1z" /></svg></Segment>
          <Segment $on aria-label="Graphs"><svg width="26" height="22" viewBox="0 0 26 22" fill="none" stroke="currentColor" strokeWidth="1.700"><path d="M1 1v20h25M3 18l7-13 8 8 6-9" /></svg></Segment>
          <Segment aria-label="Layouts"><svg width="26" height="24" viewBox="0 0 26 24" fill="none" stroke="currentColor" strokeWidth="1.600"><path d="M1 1v8h25M1 6q6-5 12-2t12-2M1 13v10h25M6 23v-6M12 23v-4M18 23v-6M22 23v-8" /></svg></Segment>
        </Segments>
        <SheetPicker>
          <SheetSelect aria-label="Current sheet" defaultValue={LONG}><option>{LONG}</option></SheetSelect>
          <SheetArrow><Chevron color="#fff" /></SheetArrow>
        </SheetPicker>
        <LinkTool>
          <Tool label="Link" icon={<I><g fill="none" stroke="#55585e" strokeWidth="3"><rect x="15" y="0" width="10" height="16" rx="5" transform="rotate(40 20 8)" /><rect x="5" y="14" width="10" height="16" rx="5" transform="rotate(40 10 22)" /></g><path d="M11 19l8-8" stroke="#a9acb2" strokeWidth="3" /></I>} />
          <Menu label="Link" />
        </LinkTool>
        <Position>From left: 2.57 cm., From top: 10.02 cm.</Position>
        <Zoom>
          <Tool label="Zoom out" icon={<Magnifier />} />
          <ZoomSlider type="range" min={0} max={100} defaultValue={5} aria-label="Zoom" />
          <Tool label="Zoom in" icon={<Magnifier plus />} />
        </Zoom>
      </StatusBar>
      <Watermark>163mac.com</Watermark>
    </Window>
  );
}
